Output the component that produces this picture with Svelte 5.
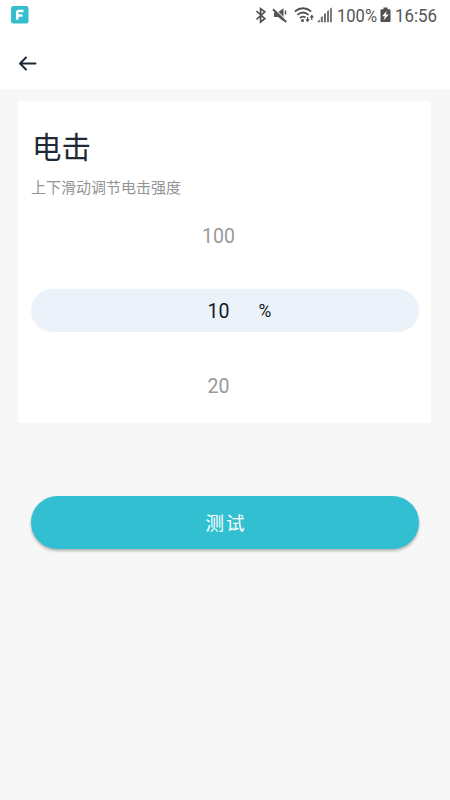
<script>
  let values = [100, 10, 20];
  let selected = 10;

  function goBack() {}

  function test() {}
</script>

<style>
  :global(body) {
    background: #f7f7f7;
  }

  .screen {
    height: 800px;
    font-family: Roboto, "Noto Sans CJK SC", sans-serif;
    color: #1f2a37;
  }

  header {
    height: 89px;
    background: white;
  }

  .status {
    display: flex;
    justify-content: space-between;
    height: 30px;
  }

  svg {
    display: block;
  }

  .status text {
    font-size: 18.6px;
    fill: #555;
  }

  .back {
    display: block;
    margin: 17px 0 0 11px;
    padding: 0;
    border: 0;
    background: none;
  }

  .card {
    box-sizing: border-box;
    height: 322px;
    margin: 12px 19px 0 18px;
    padding: 27px 12px 0 13px;
    background: white;
    border-radius: 2px;
  }

  h1 {
    margin: 0 0 0 1px;
    font-size: 29.5px;
    font-weight: 400;
    line-height: 40px;
  }

  p {
    margin: 10px 0 0;
    font-size: 15px;
    line-height: 20px;
    color: #929497;
  }

  .row {
    box-sizing: border-box;
    display: flex;
    align-items: center;
    height: 43px;
    margin-top: 32px;
    padding-top: 2px;
    border-radius: 22px;
    font-size: 19.5px;
    color: #999;
  }

  p + .row {
    margin-top: 15.5px;
  }

  .row.selected {
    background: #ebf2f9;
    color: #15181c;
  }

  .value {
    width: 80px;
    margin-left: 147.5px;
    text-align: center;
  }

  .unit {
    font-size: 17.5px;
  }

  .test {
    display: block;
    width: 388px;
    height: 53px;
    margin: 73px 0 0 31px;
    padding: 0 0 1px 2px;
    border: 0;
    border-radius: 27px;
    background: #31bfd1;
    box-shadow: 0 2px 3px rgba(0, 0, 0, 0.28);
    color: white;
    font: inherit;
    font-size: 18.5px;
    letter-spacing: 2px;
  }
</style>

<div class="screen">
  <header>
    <div class="status">
      <svg width="40" height="30">
        <rect x="11" y="6" width="17.5" height="17.5" rx="2.5" fill="#36bece" />
        <path d="M17.2 19.8V12.4q0-1.5 1.5-1.5h4.8M17.2 15.6h5.3" fill="none" stroke="white" stroke-width="2.5" />
      </svg>
      <svg width="200" height="30">
        <!-- bluetooth -->
        <path d="M6.5 11l8.3 7.7-4.2 3.3V8.6l4.2 3.2-8.3 7.7" fill="none" stroke="#505050" stroke-width="1.7" />
        <!-- muted speaker -->
        <path d="M24 12.3h4l5.5-4v13l-5.5-4.3h-4z" fill="#555" />
        <path d="M24 8.2l13 13" stroke="white" stroke-width="1.3" />
        <path d="M23 9.2l13.2 12.8" stroke="#555" stroke-width="2" />
        <path d="M35.5 10.5v4" stroke="#555" stroke-width="1.5" />
        <!-- wifi -->
        <g fill="none" stroke="#505050" stroke-width="1.7">
          <path d="M44.8 11.5q8.2-6.5 16.4 0" />
          <path d="M47.4 14.8q5.6-4.6 11.2 0" />
          <path d="M49.9 18q3-2.5 5.6-.5" />
        </g>
        <circle cx="52.5" cy="20.5" r="1.5" fill="#505050" />
        <path d="M57.6 17v4M61.8 20v-4" stroke="#505050" stroke-width="1.2" />
        <path d="M55.4 19.3h4.4l-2.2 2.9zM59.6 17.5h4.4l-2.2-2.9z" fill="#505050" />
        <!-- signal -->
        <path d="M67 22.3l2.8-3v3zM70.8 22.3v-5l2-1.2v6.2zM74 22.3v-8.2l1.9-1.2v9.4zM77.1 22.3v-11l1.8-1.3v12.3zM80.1 22.3V8.6l1.7-1v14.7z" fill="#666" />
        <text x="87" y="21.9" textLength="40" lengthAdjust="spacingAndGlyphs">100%</text>
        <!-- charging battery -->
        <path d="M131.5 9.3h2V7.6h4v1.7h2q1 0 1 1V21q0 1-1 1h-8q-1 0-1-1V10.3q0-1 1-1z" fill="#505050" />
        <path d="M136.8 10.8l-4.7 5.4h2.8l-1.5 4.3 5.5-6h-3.1z" fill="white" />
        <text x="145" y="21.9" textLength="42" lengthAdjust="spacingAndGlyphs">16:56</text>
      </svg>
    </div>
    <button class="back" aria-label="back" on:click={goBack}>
      <svg width="32" height="32">
        <path d="M24.5 16.5H9.5M15 10.5l-6 6 6 6" fill="none" stroke="#1b2533" stroke-width="1.9" stroke-linecap="round" stroke-linejoin="round" />
      </svg>
    </button>
  </header>

  <section class="card">
    <h1>电击</h1>
    <p>上下滑动调节电击强度</p>
    {#each values as value}
      <div class="row" class:selected={value === selected}>
        <span class="value">{value}</span>
        {#if value === selected}
          <span class="unit">%</span>
        {/if}
      </div>
    {/each}
  </section>

  <button class="test" on:click={test}>测试</button>
</div>
